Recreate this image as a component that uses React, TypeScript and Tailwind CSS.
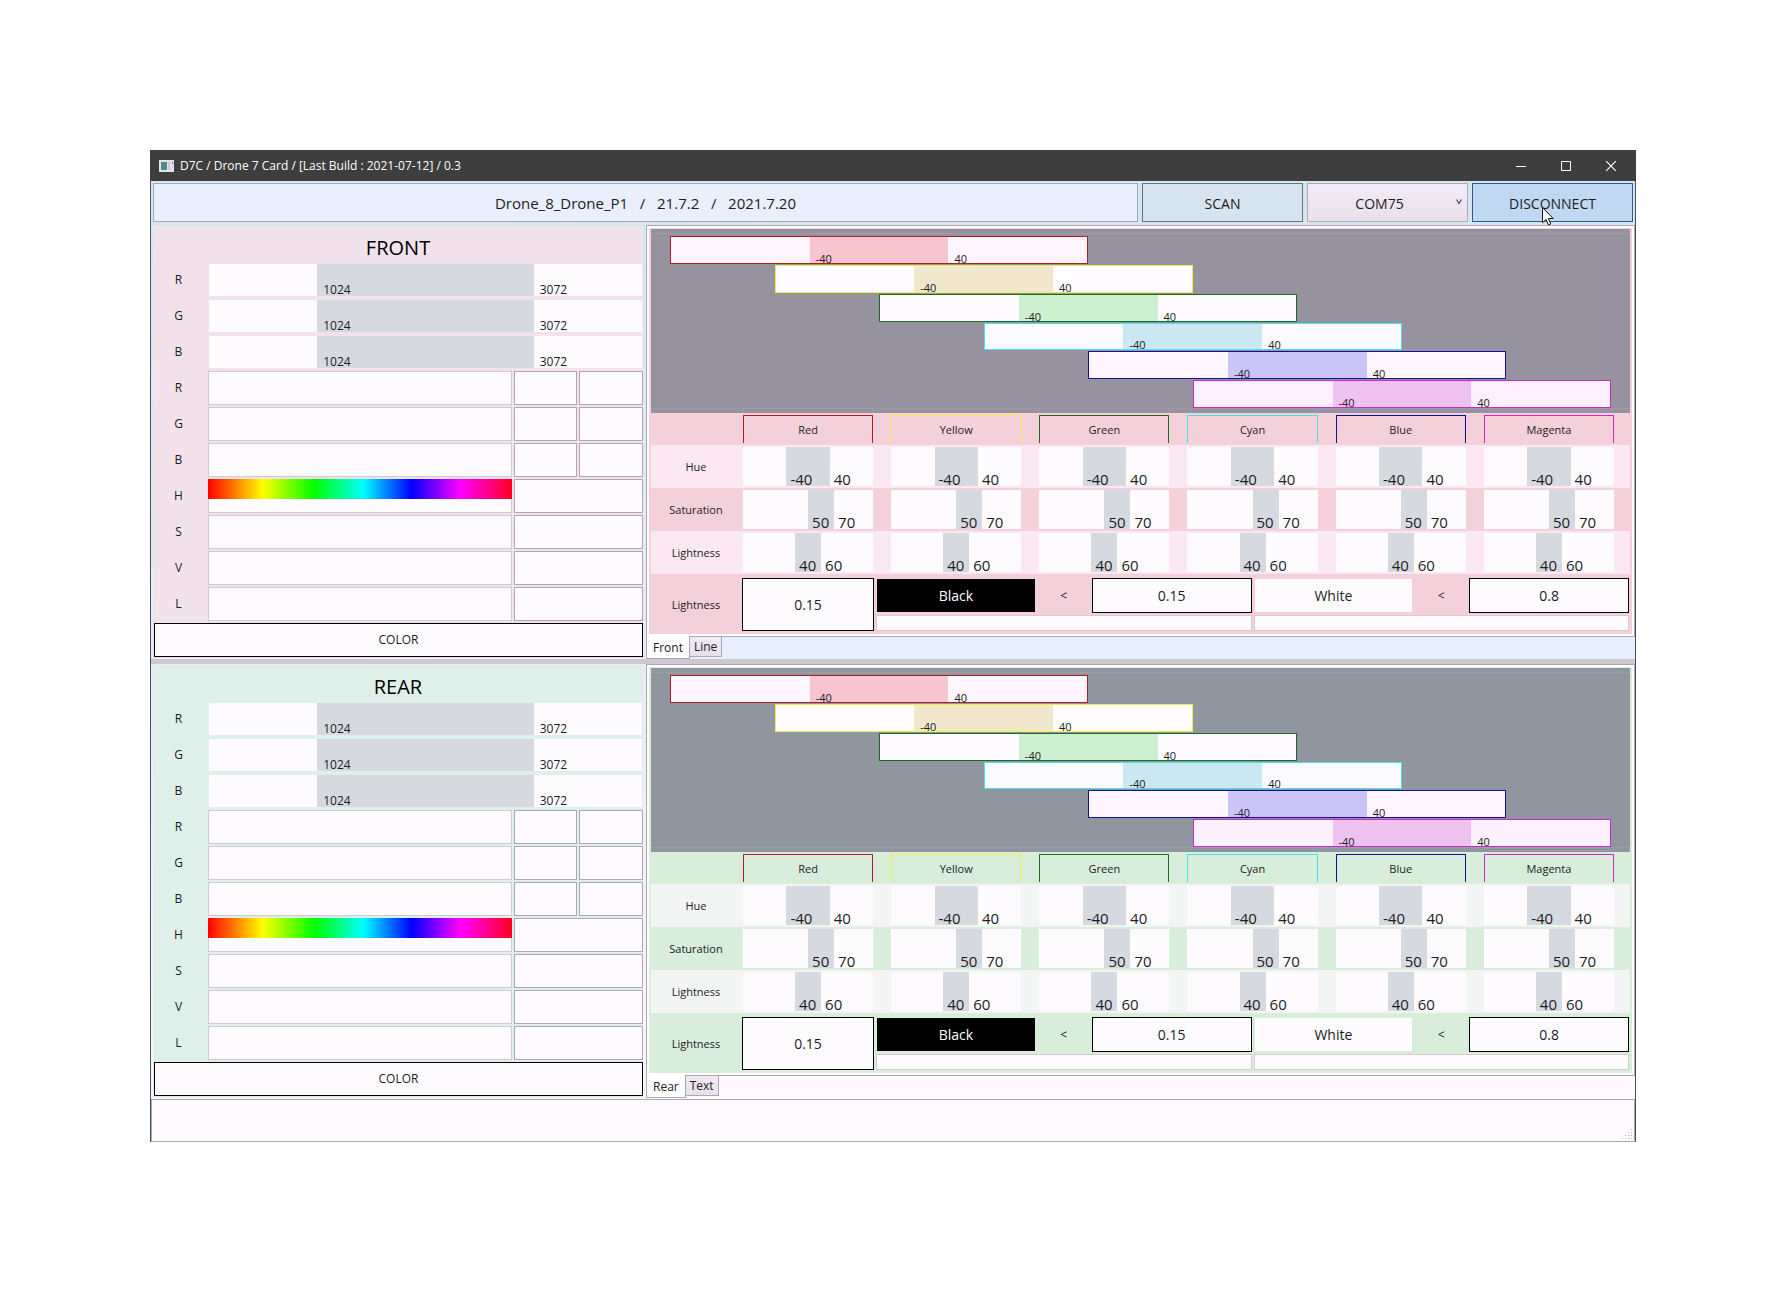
import React from "react";

type Theme = {
  title: string;
  id: string;
  side: string;
  canvas: string;
  canvasLine: string;
  base: string;
  stripe: string;
  strip: string;
  other: string;
  tab: string;
};

const FRONT: Theme = {
  title: "FRONT",
  id: "front",
  side: "bg-[#f2e2ec]",
  canvas: "bg-[#9692a0]",
  canvasLine: "border-[#a19aab]",
  base: "bg-[#f4d0da]",
  stripe: "bg-[#fce8f2]",
  strip: "bg-[#e8effc]",
  tab: "Front",
  other: "Line",
};

const REAR: Theme = {
  title: "REAR",
  id: "rear",
  side: "bg-[#dff0ea]",
  canvas: "bg-[#9096a0]",
  canvasLine: "border-[#9aa0a8]",
  base: "bg-[#d9eddb]",
  stripe: "bg-[#f2f5f4]",
  strip: "bg-[#fdf9ff]",
  tab: "Rear",
  other: "Text",
};

const HUES = [
  { name: "Red", pos: "col-start-1", edge: "border-[#b01c28]", bg: "bg-[#fff5ff]", fill: "bg-[#f6c5cf]" },
  { name: "Yellow", pos: "col-start-2", edge: "border-[#f2ee44]", bg: "bg-[#fffdff]", fill: "bg-[#f0e7cd]" },
  { name: "Green", pos: "col-start-3", edge: "border-[#1c6a24]", bg: "bg-[#fefbff]", fill: "bg-[#ccf0d0]" },
  { name: "Cyan", pos: "col-start-4", edge: "border-[#44e4ea]", bg: "bg-[#fafaff]", fill: "bg-[#cbe8f2]" },
  { name: "Blue", pos: "col-start-5", edge: "border-[#14109c]", bg: "bg-[#fff5ff]", fill: "bg-[#cbc4f6]" },
  { name: "Magenta", pos: "col-start-6", edge: "border-[#cc28cc]", bg: "bg-[#fff0ff]", fill: "bg-[#f0c2f1]" },
];

const LIMITS = [
  { name: "Hue", cols: "grid-cols-[1fr_1fr_1fr]", low: "-40", high: "40" },
  { name: "Saturation", cols: "grid-cols-[5fr_2fr_3fr]", low: "50", high: "70" },
  { name: "Lightness", cols: "grid-cols-[4fr_2fr_4fr]", low: "40", high: "60" },
];

function Range({ cols, low, high, fill, text }: { cols: string; low: string; high: string; fill: string; text: string }) {
  return (
    <div className={`grid h-full ${cols} ${text}`}>
      <span />
      <span className={`flex items-end ${fill}`}>{low}</span>
      <span className="flex items-end">{high}</span>
    </div>
  );
}

function SidePanel({ t }: { t: Theme }) {
  return (
    <section className="flex flex-col py-px pr-[3px] pl-0.5">
      <div className={`flex flex-1 flex-col ${t.side}`}>
        <h2 className="flex h-9 items-center justify-center pt-2 text-xl text-black">{t.title}</h2>
        {["R", "G", "B"].map((n) => (
          <div key={n} className="grid h-9 grid-cols-[55px_1fr] items-center">
            <span className="pr-1 text-center text-xs">{n}</span>
            <div className="mr-px ml-px h-8 bg-[#fefbff]">
              <Range cols="grid-cols-[1fr_2fr_1fr]" low="1024" high="3072" fill="bg-[#d7d9e1]" text="text-xs leading-3 [&>span]:pl-1.5" />
            </div>
          </div>
        ))}
        {["R", "G", "B", "H", "S", "V", "L"].map((n, i) => (
          <div key={n} className="grid h-9 grid-cols-[55px_1fr] items-center">
            <span className="pr-1 text-center text-xs">{n}</span>
            <div className="grid grid-cols-[304fr_63fr_64fr] gap-x-0.5">
              <div className="h-[34px] border border-[#d3c9d5] bg-[#fefbff]">
                {n === "H" && (
                  <div className="-mx-px -mt-px h-5 bg-[linear-gradient(to_right,#f00,#ff0_18%,#0f0_35%,#0ff_51%,#00f_67%,#f0f_83%,#f02)]" />
                )}
              </div>
              {i < 3 ? (
                <>
                  <input aria-label={`${t.title} ${n} low`} readOnly className="h-[34px] w-full min-w-0 border border-[#b0a6b6] bg-[#fefbff]" />
                  <input aria-label={`${t.title} ${n} high`} readOnly className="h-[34px] w-full min-w-0 border border-[#b0a6b6] bg-[#fefbff]" />
                </>
              ) : (
                <input
                  aria-label={`${t.title} ${n} value`}
                  readOnly
                  className="col-span-2 h-[34px] w-full min-w-0 border border-[#b0a6b6] bg-[#fefbff]"
                />
              )}
            </div>
          </div>
        ))}
        <button className="mt-px ml-px h-[34px] border border-black bg-[#fefbff] text-xs">COLOR</button>
      </div>
    </section>
  );
}

function Threshold({ name, value, dark }: { name: string; value: string; dark?: boolean }) {
  return (
    <div className="flex flex-1 flex-col gap-0.5">
      <div className="grid h-[35px] grid-cols-[160fr_56fr_160fr] items-center">
        <button className={`mx-px h-[33px] text-sm ${dark ? "bg-black text-white" : "bg-[#fefbff]"}`}>{name}</button>
        <span className="text-center text-xs">&lt;</span>
        <input
          aria-label={`${name} threshold`}
          defaultValue={value}
          className="h-[35px] w-full min-w-0 border border-black bg-[#fefbff] text-center text-sm"
        />
      </div>
      <div className="h-4 border border-[#dcc9d5] bg-[#fefbff]" />
    </div>
  );
}

function TabPanel({ t }: { t: Theme }) {
  return (
    <section className="flex flex-col">
      <div className="border border-[#aca6b6] bg-white p-0.5">
        <div className={`px-0.5 py-px ${t.base}`}>
          <div className={`h-[184px] pt-1 ${t.canvas}`}>
            <div className={`grid h-[176px] grid-cols-9 grid-rows-6 gap-y-px border-y px-[19px] pt-0.5 ${t.canvasLine}`}>
              {HUES.map((h) => (
                <div key={h.name} className={`col-span-4 min-h-0 border ${h.pos} ${h.edge} ${h.bg}`}>
                  <Range cols="grid-cols-3" low="-40" high="40" fill={h.fill} text="text-[11px] leading-[8px] [&>span]:pl-1.5" />
                </div>
              ))}
            </div>
          </div>
          <table className="w-full table-fixed border-collapse text-[11px]">
            <thead>
              <tr className="h-8">
                <td className="w-[90px]" />
                {HUES.map((h) => (
                  <th key={h.name} scope="col" className="p-0 font-normal">
                    <div className={`mr-4 ml-0.5 flex h-7 items-center justify-center border border-b-0 pt-0.5 ${h.edge}`}>{h.name}</div>
                  </th>
                ))}
              </tr>
            </thead>
            <tbody>
              {LIMITS.map((l, i) => (
                <tr key={l.name} className={`h-[43px] ${i % 2 === 0 ? t.stripe : t.base}`}>
                  <th scope="row" className="p-0 pt-0.5 font-normal">{l.name}</th>
                  {HUES.map((h) => (
                    <td key={h.name} className="p-0">
                      <div className="mr-4 ml-0.5 h-[39px] bg-[#fefbff]">
                        <Range cols={l.cols} low={l.low} high={l.high} fill="bg-[#d7d9e1]" text="text-[15px] leading-3.5 [&>span]:pl-1" />
                      </div>
                    </td>
                  ))}
                </tr>
              ))}
            </tbody>
          </table>
          <div className="flex h-[59px] pt-1 pr-px">
            <label htmlFor={`${t.id}-light`} className="w-[91px] self-center pr-px text-center text-[11px]">Lightness</label>
            <input
              id={`${t.id}-light`}
              defaultValue="0.15"
              className="mr-0.5 h-[53px] w-[132px] border border-black bg-[#fefbff] text-center text-sm"
            />
            <div className="flex flex-1 gap-0.5">
              <Threshold name="Black" value="0.15" dark />
              <Threshold name="White" value="0.8" />
            </div>
          </div>
        </div>
      </div>
      <div className={`flex flex-1 items-start text-xs ${t.strip}`}>
        <button className="-mt-px h-[23px] border border-t-0 border-[#aca6b6] bg-white px-1.5 pt-0.5">{t.tab}</button>
        <button className="-mt-px h-[21px] border border-l-0 border-[#aca6b6] bg-gradient-to-b from-[#f2eaf4] to-[#e8e0ea] px-1">{t.other}</button>
      </div>
    </section>
  );
}

const TOOL = "h-[39px] w-[161px] border pt-0.5 text-sm";

export default function App() {
  return (
    <main className="min-h-screen bg-white p-[150px] font-['Open_Sans','Noto_Sans',sans-serif] text-[#1c1c24]">
      <div className="border-x border-[#44505e]">
        <header className="-mx-px flex h-[31px] items-center bg-[#3e3e3e] pl-[9px] text-white">
          <svg width="15" height="12" viewBox="0 0 15 12" className="mr-1.5">
            <rect width="15" height="12" fill="#e4dfec" />
            <rect x="2" y="2" width="6" height="8" fill="#4c8c88" />
            <rect x="9" y="2" width="2" height="8" fill="#cdc8d8" />
            <rect x="13" y="2" width="1" height="2" fill="#77738a" />
          </svg>
          <h1 className="flex-1 text-xs">D7C / Drone 7 Card / [Last Build : 2021-07-12] / 0.3</h1>
          <button aria-label="Minimize" className="flex w-[45px] justify-center">
            <svg width="10" height="10" stroke="#fff" fill="none"><path d="M0 5.5h10" /></svg>
          </button>
          <button aria-label="Maximize" className="flex w-[45px] justify-center">
            <svg width="10" height="10" stroke="#fff" fill="none"><path d="M.5.5h9v9h-9z" /></svg>
          </button>
          <button aria-label="Close" className="mr-[3px] flex w-[45px] justify-center">
            <svg width="10" height="10" stroke="#fff" strokeWidth="1.2" fill="none"><path d="M0 0l10 10M10 0L0 10" /></svg>
          </button>
        </header>
        <div className="bg-[linear-gradient(to_bottom,#d4e6f0,#e4eaf4_40%,#fbf6fc)]">
          <div className="flex h-11 gap-1 px-0.5 pt-0.5">
            <div className="flex h-[39px] flex-1 items-center justify-center border border-[#a6aabc] bg-[#e9effd] pt-0.5 text-[15px] whitespace-pre">
              {"Drone_8_Drone_P1   /   21.7.2   /   2021.7.20"}
            </div>
            <button className={`${TOOL} border-[#66727e] bg-[#d7e3ee]`}>SCAN</button>
            <div className="relative">
              <select
                aria-label="Port"
                className={`${TOOL} appearance-none border-[#aeaab8] bg-gradient-to-b from-[#f3ebf6] to-[#e9e0e9] pr-4 text-center [text-align-last:center]`}
              >
                <option>COM75</option>
              </select>
              <svg className="pointer-events-none absolute top-4 right-1.5" width="6" height="6" fill="none" stroke="#55525e" strokeWidth="1.3">
                <path d="M.6.5L3 4.5 5.4.5" />
              </svg>
            </div>
            <div className="relative">
              <button className={`${TOOL} border-[#2c5c8c] bg-[#c0d8f2]`}>DISCONNECT</button>
              <svg className="pointer-events-none absolute top-6 left-[70px]" width="12" height="19" viewBox="0 0 12 19">
                <path d="M.5.5v15.2l3.5-3.3 2.4 5.5 2.4-1-2.4-5.4h4.8z" fill="#fff" stroke="#111" />
              </svg>
            </div>
          </div>
          <div className="grid h-[434px] grid-cols-[495fr_989fr]">
            <SidePanel t={FRONT} />
            <TabPanel t={FRONT} />
          </div>
          <div role="separator" className="h-[5px] bg-[#cfc8d3]" />
          <div className="grid h-[435px] grid-cols-[495fr_989fr]">
            <SidePanel t={REAR} />
            <TabPanel t={REAR} />
          </div>
        </div>
        <footer className="flex h-[43px] items-end justify-end border border-[#aca6b0] bg-[#fdf9fc] p-px">
          <svg width="11" height="11" fill="#bab4bf">
            <path d="M9 0h1v1H9zM6 3h1v1H6zM9 3h1v1H9zM3 6h1v1H3zM6 6h1v1H6zM9 6h1v1H9zM0 9h1v1H0zM3 9h1v1H3zM6 9h1v1H6zM9 9h1v1H9z" />
          </svg>
        </footer>
      </div>
    </main>
  );
}
